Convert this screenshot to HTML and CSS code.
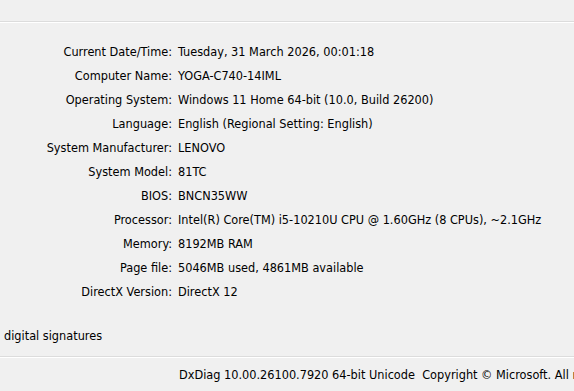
FILE: index.html
```html
<!DOCTYPE html>
<html>
<head>
<meta charset="utf-8">
<link rel="stylesheet" href="styles.css">
</head>
<body>
<div class="window">
  <div class="top"></div>
  <div class="sep"></div>
  <div class="info">
    <div class="label">Current Date/Time:</div><div class="value">Tuesday, 31 March 2026, 00:01:18</div>
    <div class="label">Computer Name:</div><div class="value">YOGA-C740-14IML</div>
    <div class="label">Operating System:</div><div class="value">Windows 11 Home 64-bit (10.0, Build 26200)</div>
    <div class="label">Language:</div><div class="value">English (Regional Setting: English)</div>
    <div class="label">System Manufacturer:</div><div class="value">LENOVO</div>
    <div class="label">System Model:</div><div class="value">81TC</div>
    <div class="label">BIOS:</div><div class="value">BNCN35WW</div>
    <div class="label">Processor:</div><div class="value">Intel(R) Core(TM) i5-10210U CPU @ 1.60GHz (8 CPUs), ~2.1GHz</div>
    <div class="label">Memory:</div><div class="value">8192MB RAM</div>
    <div class="label">Page file:</div><div class="value">5046MB used, 4861MB available</div>
    <div class="label">DirectX Version:</div><div class="value">DirectX 12</div>
  </div>
  <div class="sig">digital signatures</div>
  <div class="sep"></div>
  <div class="footer">DxDiag 10.00.26100.7920 64-bit Unicode&nbsp; Copyright © Microsoft. All rights reserved.</div>
</div>
</body>
</html>
```

FILE: styles.css
```css
html, body {
  margin: 0;
  padding: 0;
  background: #f0f0f0;
}
.window {
  width: 574px;
  height: 391px;
  overflow: hidden;
  font-family: "DejaVu Sans Condensed", "DejaVu Sans", sans-serif;
  font-size: 12.6px;
  color: #000;
  display: flex;
  flex-direction: column;
}
.top {
  height: 21px;
  flex: none;
}
.sep {
  flex: none;
  height: 1px;
  background: #dcdcdc;
  border-bottom: 1px solid #ffffff;
}
.info {
  flex: none;
  display: grid;
  grid-template-columns: 172px auto;
  column-gap: 6px;
  grid-auto-rows: 24px;
  margin-top: 16px;
  align-items: center;
}
.label {
  text-align: right;
  white-space: nowrap;
}
.value {
  white-space: nowrap;
}
.sig {
  flex: none;
  margin-top: 25px;
  padding-left: 4px;
  line-height: 16px;
  height: 16px;
  margin-bottom: 12px;
}
.footer {
  flex: none;
  padding-left: 179px;
  margin-top: 9px;
  line-height: 16px;
  white-space: nowrap;
}
```
